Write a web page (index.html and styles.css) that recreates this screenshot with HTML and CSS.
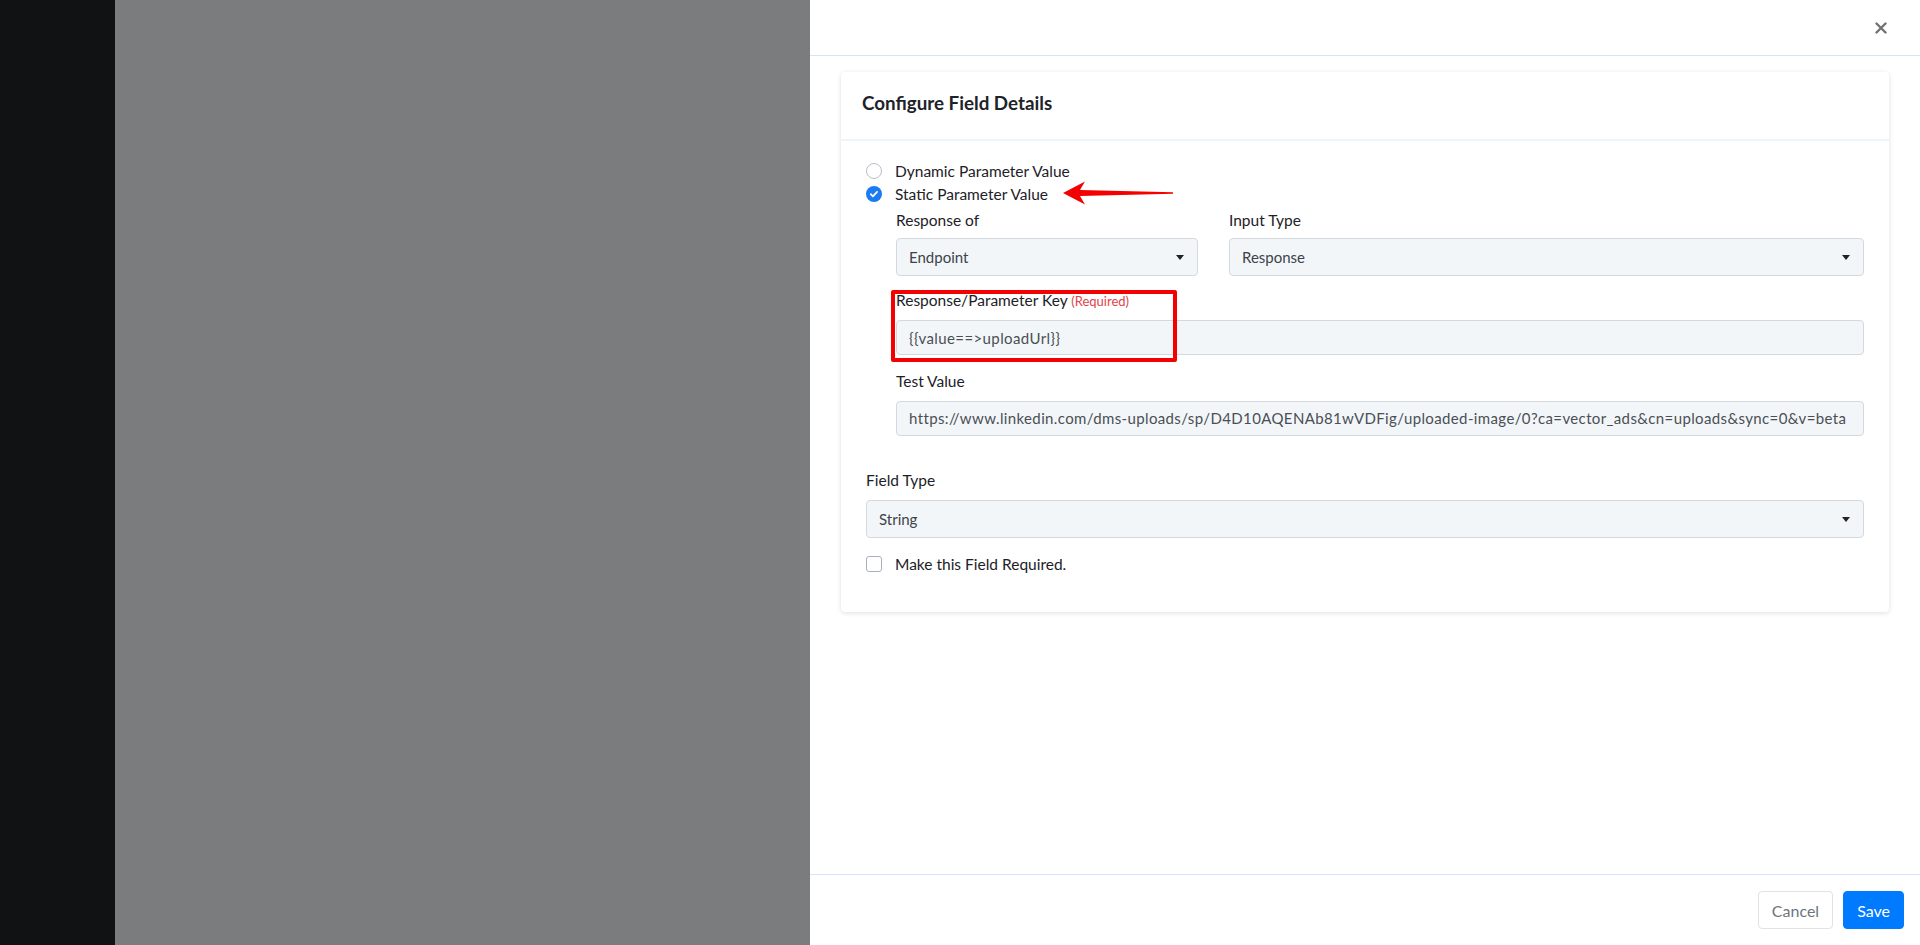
FILE: index.html
```html
<!DOCTYPE html>
<html>
<head>
<meta charset="utf-8">
<link rel="stylesheet" href="styles.css">
</head>
<body>
<div class="sidebar"></div>
<div class="overlay"></div>
<div class="panel">
  <div class="panel-head">
    <svg class="close" width="12" height="12" viewBox="0 0 12 12"><path d="M1.5 1.5 L10.5 10.5 M10.5 1.5 L1.5 10.5" stroke="#727272" stroke-width="2.4" stroke-linecap="round"/></svg>
  </div>
  <div class="panel-body">
    <div class="card">
      <div class="card-head">Configure Field Details</div>
      <div class="card-body">
        <label class="radio-row"><span class="radio"></span><span>Dynamic Parameter Value</span></label>
        <label class="radio-row"><span class="radio checked"><svg viewBox="0 0 16 16" width="16" height="16"><circle cx="8" cy="8" r="8" fill="#1a7cf0"/><path d="M4.8 8.2l2.1 2.1 4.2-4.4" fill="none" stroke="#fff" stroke-width="1.7" stroke-linecap="round" stroke-linejoin="round"/></svg></span><span>Static Parameter Value</span></label>
        <div class="sub">
          <div class="grid2">
            <div class="field">
              <div class="label">Response of</div>
              <div class="select">Endpoint<span class="caret"></span></div>
            </div>
            <div class="field">
              <div class="label">Input Type</div>
              <div class="select">Response<span class="caret"></span></div>
            </div>
          </div>
          <div class="field key-field">
            <div class="label">Response/Parameter Key <span class="req">(Required)</span></div>
            <div class="input">{{value==&gt;uploadUrl}}</div>
            <div class="highlight"></div>
          </div>
          <div class="field test-field">
            <div class="label">Test Value</div>
            <div class="input url">https://www.linkedin.com/dms-uploads/sp/D4D10AQENAb81wVDFig/uploaded-image/0?ca=vector_ads&amp;cn=uploads&amp;sync=0&amp;v=beta</div>
          </div>
        </div>
        <div class="field ft">
          <div class="label">Field Type</div>
          <div class="select">String<span class="caret"></span></div>
        </div>
        <label class="check-row"><span class="checkbox"></span><span>Make this Field Required.</span></label>
        <svg class="arrow" width="112" height="26" viewBox="0 0 112 26"><path d="M0 13 L22 1.5 L17 10 L110 12.2 L110 13.8 L17 16 L22 24.5 Z" fill="#f40000"/></svg>
      </div>
    </div>
  </div>
  <div class="panel-foot">
    <button class="btn btn-light">Cancel</button>
    <button class="btn btn-primary">Save</button>
  </div>
</div>
</body>
</html>
```
FILE: styles.css
```css
* { box-sizing: border-box; }
html, body { margin: 0; height: 945px; overflow: hidden; }
body {
  display: flex;
  font-family: Lato, "Noto Sans", sans-serif;
  font-size: 15.5px;
  color: #1d2127;
}
.sidebar { width: 115px; flex: none; background: #111214; }
.overlay { flex: 1; background: #7b7c7e; }
.panel { width: 1110px; flex: none; min-width: 0; background: #fff; display: flex; flex-direction: column; }
.panel-head {
  height: 56px;
  border-bottom: 1px solid #d6e3fa;
  display: flex;
  justify-content: flex-end;
  align-items: center;
  padding: 0 33px 0 0;
}
.close { display: block; margin-top: 1px; }
.panel-body { flex: 1; min-width: 0; padding: 16px 31px 0 31px; }
.card {
  background: #fff;
  border-radius: 4px;
  box-shadow: 0 1px 5px rgba(0,0,0,0.13);
  min-width: 0;
}
.card-head {
  height: 69px;
  padding: 0 21px 6px 21px;
  display: flex;
  align-items: center;
  font-size: 18.8px;
  font-weight: 700;
  color: #1e2329;
  border-bottom: 2px solid #eef4fc;
}
.card-body { position: relative; padding: 18px 25px 37px 25px; }
.radio-row, .check-row { display: flex; align-items: center; gap: 13px; height: 23px; }
.radio { width: 16px; height: 16px; border-radius: 50%; border: 1px solid #b9bec6; display: block; }
.radio.checked { border: none; }
.radio svg { display: block; }
.sub { padding-left: 30px; margin-top: 5px; }
.grid2 { display: grid; grid-template-columns: 302px minmax(0, 1fr); column-gap: 31px; }
.field { display: flex; flex-direction: column; min-width: 0; }
.label { height: 20px; line-height: 20px; margin-bottom: 8px; }
.req { color: #e0434b; font-size: 13px; }
.select, .input {
  height: 38px;
  min-width: 0;
  background: #f3f6f9;
  border: 1px solid #d4d9e0;
  border-radius: 4px;
  display: flex;
  align-items: center;
  padding: 0 12px;
  color: #3d434a;
  font-size: 15px;
  position: relative;
}
.input { height: 35px; color: #4a4f55; white-space: nowrap; overflow: hidden; letter-spacing: 0.4px; }
.input.url { display: block; line-height: 33px; letter-spacing: 0.37px; }
.select .caret {
  position: absolute;
  right: 13px;
  top: 16px;
  width: 0; height: 0;
  border-left: 4px solid transparent;
  border-right: 4px solid transparent;
  border-top: 5px solid #222;
}
.key-field { position: relative; margin-top: 14px; }
.key-field .label, .test-field .label, .ft .label { margin-bottom: 10px; }
.highlight {
  position: absolute;
  left: -5px; top: 0;
  width: 286px; height: 72px;
  border: 4px solid #f50000;
  border-radius: 2px;
}
.test-field { margin-top: 16px; }
.ft { margin-top: 34px; }
.check-row { margin-top: 14px; }
.checkbox { width: 16px; height: 16px; border: 1px solid #a9b0ba; border-radius: 3px; display: block; }
.arrow { position: absolute; left: 222px; top: 39px; }
.panel-foot {
  height: 71px;
  border-top: 1px solid #d6e3fa;
  display: flex;
  justify-content: flex-end;
  align-items: flex-start;
  gap: 10px;
  padding: 16px 16px 0 0;
}
.btn {
  height: 38px;
  border-radius: 4px;
  font-family: Lato, sans-serif;
  font-size: 16px;
  padding: 0 13px;
}
.btn-light { background: #fff; color: #6c757d; border: 1px solid #dfe3e8; }
.btn-primary { background: #007bff; color: #fff; border: 1px solid #007bff; }
```
